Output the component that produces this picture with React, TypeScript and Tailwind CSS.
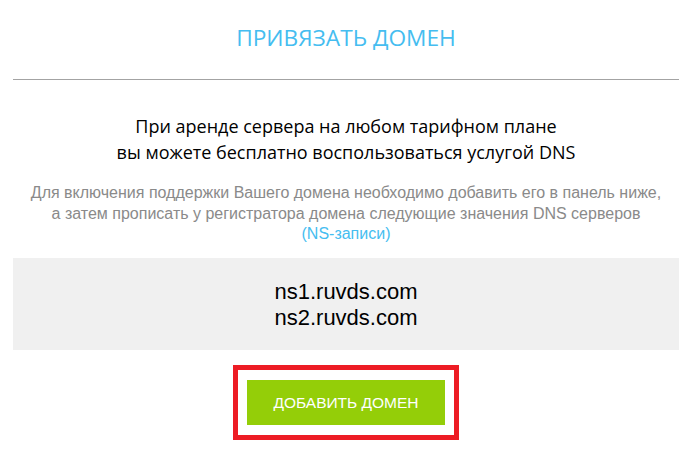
export default function App() {
  return (
    <div className="w-[692px] h-[462px] bg-white px-[13px] overflow-hidden">
      <h1
        className="pt-[22px] text-center text-[22.7px] leading-[32px] font-normal text-[#45bdf0]"
        style={{ fontFamily: '"Open Sans", sans-serif' }}
      >
        ПРИВЯЗАТЬ ДОМЕН
      </h1>
      <div className="mt-[25px] h-px bg-[#a3a3a3]" />
      <div
        className="mt-[33px] text-center text-[18px] leading-[26px] text-black"
        style={{ fontFamily: '"Open Sans", sans-serif' }}
      >
        При аренде сервера на любом тарифном плане
        <br />
        вы можете бесплатно воспользоваться услугой DNS
      </div>
      <div
        className="mt-[18px] text-center text-[16px] leading-[20.5px] text-[#8a8a8a]"
        style={{ fontFamily: '"Liberation Sans", Arial, sans-serif' }}
      >
        Для включения поддержки Вашего домена необходимо добавить его в панель ниже,
        <br />
        а затем прописать у регистратора домена следующие значения DNS серверов
        <br />
        <span className="text-[#45bdf0]">(NS-записи)</span>
      </div>
      <div
        className="mt-[13.5px] h-[92px] bg-[#f0f0f0] pt-[21px] text-center text-[22px] leading-[26px] text-black"
        style={{ fontFamily: '"Liberation Sans", Arial, sans-serif' }}
      >
        ns1.ruvds.com
        <br />
        ns2.ruvds.com
      </div>
      <div className="mt-[15px] flex justify-center">
        <div className="w-[226px] h-[75px] border-[5px] border-[#ed1c24] flex items-center justify-center">
          <button
            className="w-[198px] h-[45px] bg-[#94ce08] text-white text-[15.5px] uppercase"
            style={{ fontFamily: '"Liberation Sans", Arial, sans-serif' }}
          >
            Добавить домен
          </button>
        </div>
      </div>
    </div>
  );
}
